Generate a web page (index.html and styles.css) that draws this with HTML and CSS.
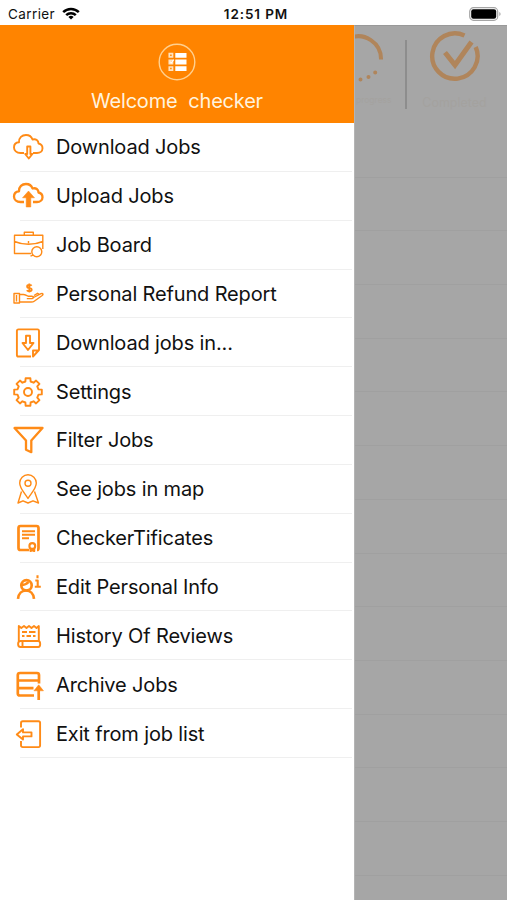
FILE: index.html
```html
<!DOCTYPE html>
<html lang="en">
<head>
  <meta charset="UTF-8" />
  <meta name="viewport" content="width=device-width, initial-scale=1.0"/>
  <title>Checker - Jobs</title>
  <link rel="stylesheet" href="styles.css">
</head>
<body>
  <div class="status-bar">
    <div class="carrier">
      <span>Carrier</span>
      <svg class="wifi" viewBox="0 0 18 13" fill="none" stroke="#000" stroke-width="2.5">
        <path d="M1.2 5.2a11 11 0 0 1 15.6 0"/>
        <path d="M4.2 8.2a6.8 6.8 0 0 1 9.6 0"/>
        <path d="M9 12.6 6.4 10a3.7 3.7 0 0 1 5.2 0z" fill="#000" stroke="none"/>
      </svg>
    </div>
    <div class="time">12:51 PM</div>
    <div class="battery">
      <svg viewBox="0 0 32 14">
        <rect x=".7" y=".7" width="28" height="12.6" rx="3.8" fill="#fff" stroke="#a5a5a5" stroke-width="1.2"/>
        <rect x="2.2" y="2.2" width="25" height="9.6" rx="2.2" fill="#000"/>
        <path d="M30.3 5v4q1.3-.6 1.3-2t-1.3-2z" fill="#a5a5a5"/>
      </svg>
    </div>
  </div>

  <div class="screen">
    <div class="drawer">
      <div class="drawer-header">
        <svg class="logo" viewBox="0 0 38 38" fill="none">
          <circle cx="19" cy="19" r="17.8" stroke="#ffd08f" stroke-width="1.4"/>
          <path d="M17.3 12.3h11.2M17.3 19h11.2M17.3 25.6h11.2" stroke="#fff" stroke-width="4.8"/>
          <path d="M11.3 10.7h3.2v3.2h-3.2zM11.3 17.4h3.2v3.2h-3.2zM11.3 24h3.2v3.2h-3.2z" stroke="#ffe3c0" stroke-width="1.7"/>
          <path d="m12 18.5 1.2 1.4 2.6-3.2" stroke="#fff" stroke-width="1.2"/>
        </svg>
        <div class="welcome">Welcome&nbsp; checker</div>
      </div>

      <ul class="menu">
        <li class="menu-item">
          <svg class="icon" viewBox="0 0 32 32">
            <path d="M12 22H8.500C4.500 22 2 19.500 2 16.500 2 13.500 4 11.500 7 11.300 6.800 6.500 10 4 14 4c3.500 0 5.500 1.500 6.500 4.500 3.500-1 6 1 6 4 2.500.5 4 2.500 4 4.700 0 3-2.500 4.800-5.500 4.800h-4"/>
            <path d="M15.200 15.500h3.200v7.500h2L16.800 27.500 13.200 23h2z"/>
          </svg>
          <span>Download Jobs</span>
        </li>
        <li class="menu-item">
          <svg class="icon bold" viewBox="0 0 32 32">
            <path d="M12 22H8.500C4.500 22 2 19.500 2 16.500 2 13.500 4 11.500 7 11.300 6.800 6.500 10 4 14 4c3.500 0 5.500 1.500 6.500 4.500 3.500-1 6 1 6 4 2.500.5 4 2.500 4 4.700 0 3-2.500 4.800-5.500 4.800h-4"/>
            <path class="solid" d="M16.500 11 22.500 17.800h-3.700v9.200h-4.600v-9.200h-3.700z"/>
          </svg>
          <span>Upload Jobs</span>
        </li>
        <li class="menu-item">
          <svg class="icon thin" viewBox="0 0 32 32">
            <path d="M19 24.500H2.500V6.300h28.300V20M2.500 12.500q6.500 2.800 14 2.800t14.300-2.800M12.300 6V3.200h9V6M16.500 12v2.300"/>
            <circle cx="24.800" cy="22.800" r="5"/>
            <path d="m21 26.200-2.500 1"/>
          </svg>
          <span>Job Board</span>
        </li>
        <li class="menu-item">
          <svg class="icon thin" viewBox="0 0 32 32">
            <path d="M2 15.500h5.500v9.500H2zM7.500 16.500h3.800c2.500 0 3.200 1.500 5 1.700h3.500c2 0 1.800 2.400 0 2.400h-5M21.500 19.500l7.500-3.800c2-.8 2.500.8 1.200 1.800l-8 5.800c-1 .7-1.500.7-3 .7H7.500M22 17.500l3.500-2.200 1.500.8M4.500 17v6.500"/>
            <path class="dollar" d="M19.600 7.800q-.6-.8-2.300-.8-2.200 0-2.200 1.500t2.200 1.600q2.400.2 2.400 1.700t-2.400 1.500q-1.800 0-2.500-1M17.300 5.500v9"/>
          </svg>
          <span>Personal Refund Report</span>
        </li>
        <li class="menu-item">
          <svg class="icon" viewBox="0 0 32 32">
            <path d="M19 29.500H6.500q-1.600 0-1.600-1.600V4q0-1.600 1.600-1.600h19q1.500 0 1.500 1.600v19l-6 6.500v-6h6"/>
            <path d="M14 8.700h4V16h3.500L16 23l-5.500-7H14z"/>
          </svg>
          <span>Download jobs in...</span>
        </li>
        <li class="menu-item">
          <svg class="icon" viewBox="0 0 32 32">
            <path d="M13.400 5.500 13.600 2.200h4.800l.2 3.300 2.990 1.240 2.470-2.190 3.390 3.390-2.190 2.470L26.500 13.400l3.300.2v4.800l-3.300.2-1.240 2.990 2.190 2.470-3.390 3.390-2.470-2.190L18.600 26.500l-.2 3.300h-4.800l-.2-3.300-2.990-1.240-2.470 2.190-3.390-3.390 2.190-2.470L5.500 18.600l-3.300-.2v-4.800l3.300-.2 1.240-2.990-2.190-2.470 3.390-3.390 2.470 2.190z"/>
            <circle cx="16" cy="16" r="4"/>
          </svg>
          <span>Settings</span>
        </li>
        <li class="menu-item">
          <svg class="icon bold" viewBox="0 0 32 32">
            <path d="M2.500 4h28L19.300 16.500V28.200L14 25.700v-9.200z"/>
          </svg>
          <span>Filter Jobs</span>
        </li>
        <li class="menu-item">
          <svg class="icon thin" viewBox="0 0 32 32">
            <path d="M16 25.500C13 20.500 7.700 15.500 7.700 10a8.300 8.300 0 0 1 16.600 0c0 5.500-5.300 10.500-8.300 15.500z"/>
            <circle cx="16" cy="10.300" r="3"/>
            <path d="M9.500 18.500 6 30l5-2.200 5 2.200 5-2.200 5.500 2.200-4-11.500"/>
          </svg>
          <span>See jobs in map</span>
        </li>
        <li class="menu-item">
          <svg class="icon heavy" viewBox="0 0 32 32">
            <path d="M17 28H8.500Q6.500 28 6.500 26V6q0-2 2-2h16q2 0 2 2v20q0 2-1.500 2"/>
            <path class="lines" d="M10 9.300h13M10 12.700h13M10 16.300h7"/>
            <circle class="lines" cx="20.300" cy="24" r="2.900"/>
            <path class="lines" d="M18.500 26.500v2.500l1.800-.8 1.900.8v-2.500"/>
          </svg>
          <span>CheckerTificates</span>
        </li>
        <li class="menu-item">
          <svg class="icon heavy" viewBox="0 0 32 32">
            <circle cx="14.500" cy="14.300" r="5.200"/>
            <path d="M9 14q5 0 7.500-3M6 27.800c.5-5.300 4-8.300 8-8.300s7.500 3 8 8.300"/>
            <path class="lines" d="M23.300 9.500h2.400v6M22.800 15.800h6M25.500 4.200v3"/>
          </svg>
          <span>Edit Personal Info</span>
        </li>
        <li class="menu-item">
          <svg class="icon" viewBox="0 0 32 32">
            <path d="M6.800 21V6l2.500 2L12 6l2.500 2L17 6l2.500 2L22 6l2.500 2L26.800 6v15"/>
            <path d="M8.500 21h17.700q2 0 2 3t-2 3H8.500q-2.400 0-2.400-3t2.400-3zM10.500 21.500v5.500"/>
            <path d="M10 12h5M17 12h6.500M10 16h2.500M14.500 16H19M21 16h2.500"/>
          </svg>
          <span>History Of Reviews</span>
        </li>
        <li class="menu-item">
          <svg class="icon heavy" viewBox="0 0 32 32">
            <path d="M22 26.500H8q-2.200 0-2.200-2V6q0-2 2.200-2h17q2 0 2 2v8.500M6 11.500h20.500M6 19.200h15.500"/>
            <path d="M26.700 31V18"/>
            <path class="solid" d="m26.700 15.800 4.800 6h-9.600z"/>
          </svg>
          <span>Archive Jobs</span>
        </li>
        <li class="menu-item">
          <svg class="icon" viewBox="0 0 32 32">
            <path d="M9 9.500V5q0-1.800 1.800-1.800h15.700q1.600 0 1.600 1.600v22.500q0 1.800-1.600 1.800H10.800Q9 29.100 9 27.300V23"/>
            <path d="M4.800 16.400 11 11.200v3.200h8.500v4H11v3.200z"/>
          </svg>
          <span>Exit from job list</span>
        </li>
      </ul>
    </div>

    <!-- job list behind the open drawer -->
    <div class="jobs">
      <div class="tabs">
        <div class="tab tab-progress">
          <svg viewBox="0 0 32 54" fill="none" stroke="#b0855b" stroke-width="4">
            <path d="M-6 10.300A22.700 22.700 0 0 1 26 31.500"/>
            <path d="M5.500 51.500v.01M13.500 49v.01M20.200 44.500v.01" stroke-linecap="round"/>
          </svg>
          <div class="tab-label">progress</div>
        </div>
        <div class="tab tab-completed">
          <svg viewBox="0 0 54 54" fill="none" stroke="#b0855b" stroke-width="4.4">
            <path d="M36.500 7.500A22.700 22.700 0 1 0 47.700 19"/>
            <path d="m17 24.500 10 12.500L43.500 14" stroke-width="5"/>
          </svg>
          <div class="tab-label">Completed</div>
        </div>
      </div>
      <div class="job-row"></div>
      <div class="job-row"></div>
      <div class="job-row"></div>
      <div class="job-row"></div>
      <div class="job-row"></div>
      <div class="job-row"></div>
      <div class="job-row"></div>
      <div class="job-row"></div>
      <div class="job-row"></div>
      <div class="job-row"></div>
      <div class="job-row"></div>
      <div class="job-row"></div>
      <div class="job-row"></div>
      <div class="job-row"></div>
    </div>
  </div>
</body>
</html>
```

FILE: styles.css
```css
* {
  box-sizing: border-box;
}

body {
  font-family: Inter, "Liberation Sans", sans-serif;
  background-color: #fff;
  color: #111;
  margin: 0;
  height: 900px;
  overflow: hidden;
}

.status-bar {
  display: grid;
  grid-template-columns: 1fr auto 1fr;
  align-items: center;
  height: 25px;
  padding: 2px 6px 0 8px;
  font-size: 13.5px;
}

.carrier {
  display: flex;
  align-items: center;
  gap: 7px;
  letter-spacing: 0.4px;
}

.wifi {
  width: 18px;
  height: 13px;
}

.time {
  font-weight: 600;
  letter-spacing: 0.9px;
  padding-left: 3px;
}

.battery {
  display: flex;
  justify-content: flex-end;
}

.battery svg {
  width: 32px;
  height: 14px;
}

.screen {
  display: flex;
  height: 875px;
}

.drawer {
  width: 354px;
  flex-shrink: 0;
  background-color: #fff;
}

.drawer-header {
  display: flex;
  flex-direction: column;
  align-items: center;
  height: 98px;
  padding-top: 18px;
  background-color: #ff8400;
}

.logo {
  width: 38px;
  height: 38px;
}

.welcome {
  margin-top: 8px;
  font-size: 20px;
  line-height: 24px;
  letter-spacing: -0.2px;
  color: #fff3df;
}

.menu {
  list-style: none;
  margin: 0;
  padding: 0;
}

.menu-item {
  display: flex;
  align-items: center;
  gap: 12px;
  height: 48.85px;
  padding-left: 12px;
  font-size: 20px;
  letter-spacing: -0.15px;
  background: linear-gradient(#efefef, #efefef) 20px 100% / 332px 1px no-repeat;
}

.icon {
  width: 32px;
  height: 32px;
  fill: none;
  stroke: #ff8b17;
  stroke-width: 1.9;
  stroke-linejoin: round;
}

.icon.thin {
  stroke-width: 1.4;
}

.icon.bold {
  stroke-width: 2.3;
}

.icon.heavy {
  stroke-width: 2.7;
}

.icon .solid {
  fill: #ff8b17;
  stroke-width: 0.5;
}

.icon .lines {
  stroke-width: 2.1;
}

.icon .dollar {
  stroke-width: 1.8;
}

.jobs {
  flex: 1;
  overflow: hidden;
  background-color: #a6a6a6;
  border-left: 1px solid #b4b4b4;
  border-top: 1px solid #999;
}

.tabs {
  display: flex;
  height: 98px;
}

.tab {
  display: flex;
  flex-direction: column;
  color: #a4a29f;
}

.tab svg {
  height: 54px;
}

.tab-label {
  margin-top: 13px;
  font-size: 12.5px;
}

.tab-progress {
  width: 52px;
  height: 69px;
  margin-top: 14px;
  border-right: 2px solid #8d8d8d;
}

.tab-progress svg {
  width: 32px;
  flex-shrink: 0;
  margin-top: -12px;
}

.tab-progress .tab-label {
  padding-left: 1px;
  font-size: 8.5px;
}

.tab-completed {
  flex: 1;
  align-items: center;
  padding: 2px 5px 0 0;
}

.tab-completed svg {
  width: 54px;
}

.job-row {
  height: 53.7px;
  border-bottom: 1px solid #a0a0a0;
}
```
